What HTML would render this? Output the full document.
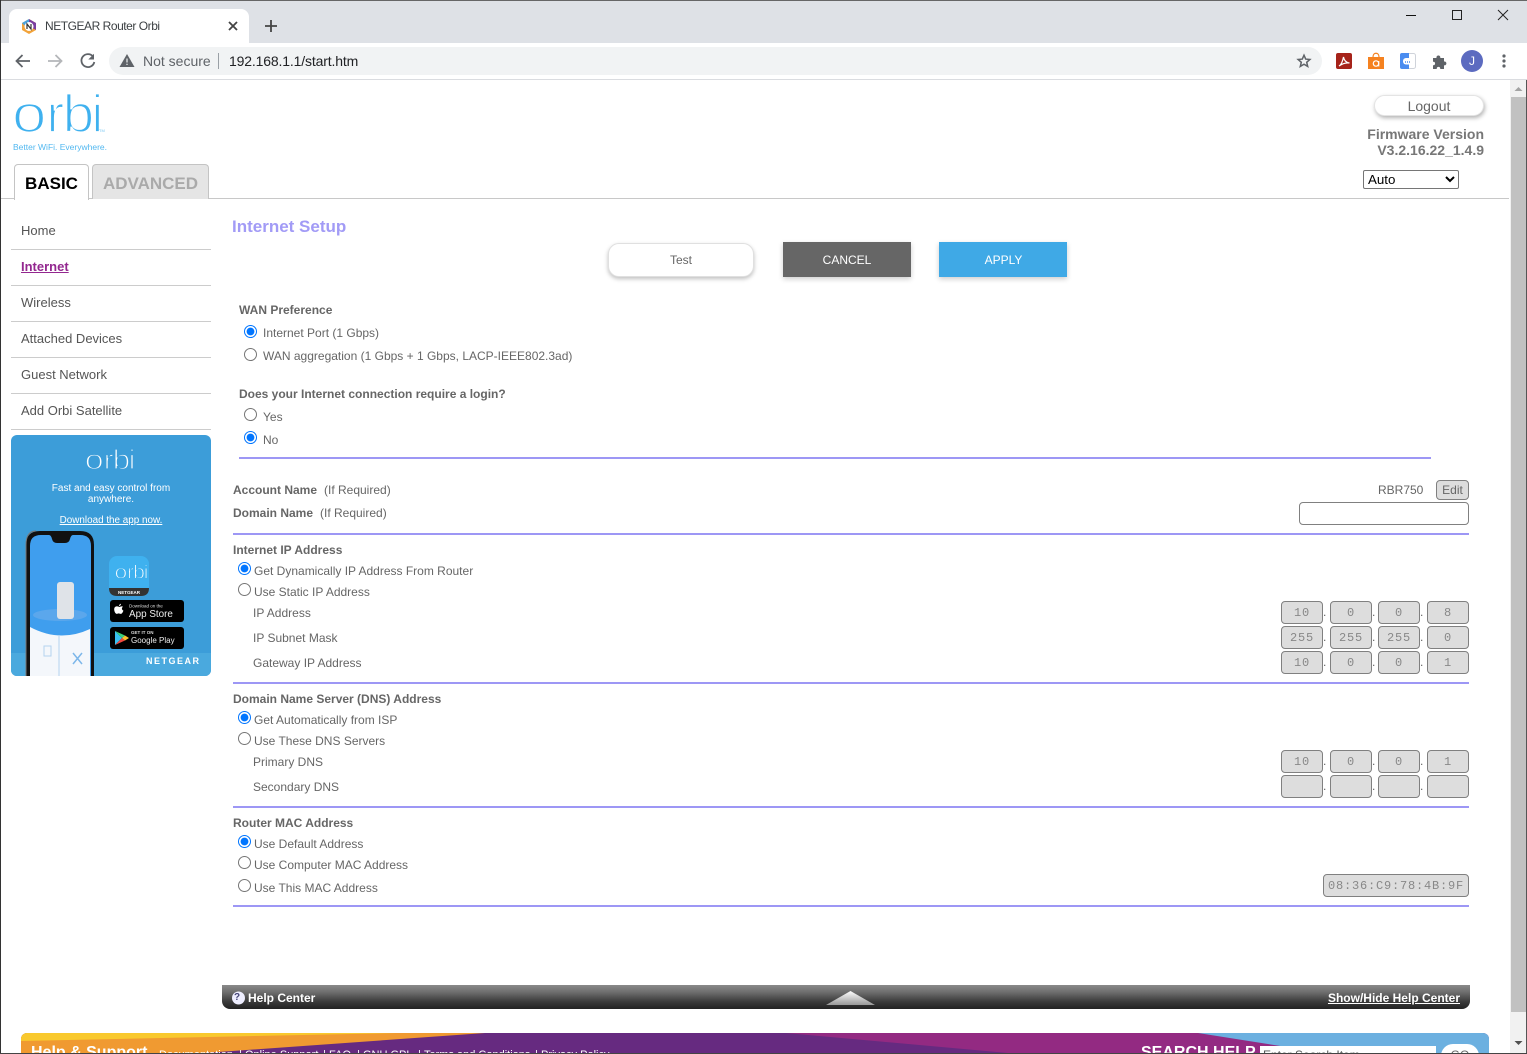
<!DOCTYPE html>
<html lang="en"><head><meta charset="utf-8"><title>NETGEAR Router Orbi</title>
<style>
html,body{margin:0;padding:0;width:1527px;height:1054px;overflow:hidden;background:#fff}
body{position:relative;font-family:"Liberation Sans",Arial,sans-serif;font-size:12px;color:#666}
.t,.b,.n,.box,.ln,.rule,input[type=radio]{position:absolute}
.t,.b,.n{white-space:nowrap;line-height:16px}
.b{font-weight:bold}
.n{font-size:13px;left:21px;color:#555}
.ln{left:11px;width:200px;height:1px;background:#ccc}
.rule{height:2px;background:#9d97f5;left:233px;width:1236px}
input[type=radio]{margin:0;width:13px;height:13px}
.box{box-sizing:border-box;height:23px;width:42px;background:#ddd;border:1px solid #808080;border-radius:4px;font-family:"Liberation Mono",monospace;font-size:12px;letter-spacing:.8px;color:#888;text-align:center;line-height:23px}
.a{left:1281px}.c2{left:1330px}.c3{left:1378px}.c4{left:1427px}
.d1{left:1323px}.d2{left:1372px}.d3{left:1420px}
.chrome{position:absolute;left:0;top:0;width:1527px;height:80px;background:#fff}
.ft{position:absolute;color:#fff;white-space:nowrap}
</style></head><body>

<!-- browser chrome -->
<div class="chrome">
 <div style="position:absolute;left:0;top:0;width:1527px;height:43px;background:#dee1e6"></div>
 <div style="position:absolute;left:9px;top:9px;width:240px;height:34px;background:#fff;border-radius:8px 8px 0 0"></div>
 <svg style="position:absolute;left:0;top:0" width="1527" height="80">
  <path d="M29 19l7 4v7l-7 4-7-4v-7z" fill="#f2a33a"/><path d="M29 19l7 4v7l-7-4z" fill="#7b3fa0"/><path d="M22 23l7-4v4l-4 3z" fill="#4aa3df"/><circle cx="29" cy="26.500" r="4.500" fill="#fff"/>
  <path d="M27 29v-5l4 5v-5" stroke="#333" stroke-width="1.200" fill="none"/>
  <path d="M229 22l8 8M237 22l-8 8" stroke="#444" stroke-width="1.800"/>
  <path d="M271 20v12M265 26h12" stroke="#444" stroke-width="1.800"/>
  <path d="M1406 15.500h10" stroke="#111"/><rect x="1452.500" y="10.500" width="9" height="9" fill="none" stroke="#222"/><path d="M1498 10l10 10M1508 10l-10 10" stroke="#222"/>
  <path d="M30 61H17M22.500 55l-6 6 6 6" stroke="#5f6368" stroke-width="1.800" fill="none"/>
  <path d="M48 61h13M55.500 55l6 6-6 6" stroke="#b4b6b9" stroke-width="1.800" fill="none"/>
  <path d="M93 56.500A6.500 6.500 0 1 0 94.300 62" stroke="#5f6368" stroke-width="1.800" fill="none"/><path d="M94 53.800v5.700h-5.700z" fill="#5f6368"/>
  <rect x="109" y="47" width="1213" height="28" rx="14" fill="#f1f3f4"/>
  <path d="M127 54l7.500 13h-15z" fill="#5f6368"/><path d="M127 58.500v4M127 63.700v1.300" stroke="#f1f3f4" stroke-width="1.200"/>
  <path d="M218.500 53v16" stroke="#9aa0a6"/>
  <path d="M1304 55.200l1.700 3.900 4.200.4-3.200 2.800 1 4.100-3.700-2.200-3.700 2.200 1-4.100-3.200-2.800 4.200-.4z" fill="none" stroke="#5f6368" stroke-width="1.500"/>
  <rect x="1336" y="53" width="16" height="16" rx="2" fill="#a6231a"/>
  <path d="M1339 66c2-1 3.500-4 4.500-9 .5 3 2 5.500 6 6-3-.5-7 .5-10.500 3z" fill="none" stroke="#fff" stroke-width="1.200"/>
  <path d="M1368 57h16v12h-16z" fill="#f58220"/><path d="M1373 57c0-5 6-5 6 0" fill="none" stroke="#f58220" stroke-width="1.200"/>
  <circle cx="1376" cy="63.500" r="2.700" fill="none" stroke="#fff" stroke-width="1.200"/><path d="M1378.800 61v5.500" stroke="#fff" stroke-width="1"/>
  <rect x="1400.500" y="53.500" width="15" height="15" rx="2" fill="#fff" stroke="#cfd3da"/>
  <path d="M1402 53h7v16h-7a2 2 0 0 1-2-2V55a2 2 0 0 1 2-2z" fill="#4a8cf0"/>
  <rect x="1403" y="58" width="9" height="6.500" rx="3" fill="#fff"/><path d="M1405 62h5" stroke="#4a8cf0" stroke-width="1.500" stroke-dasharray="1 1"/>
  <path d="M1433 58h3.500c-.6-3.300 4.400-3.300 3.800 0h3.700v3.500c3.200-.6 3.200 4.400 0 3.800V69h-3.800c.6-2.800-4-2.800-3.400 0H1433v-3.800c2.800.6 2.800-4 0-3.400z" fill="#5f6368"/>
  <circle cx="1472" cy="61" r="11" fill="#5c6bc0"/>
  <circle cx="1504" cy="56" r="1.600" fill="#5f6368"/><circle cx="1504" cy="61" r="1.600" fill="#5f6368"/><circle cx="1504" cy="66" r="1.600" fill="#5f6368"/>
  <path d="M0 79.500h1527" stroke="#dadce0"/>
 </svg>
 <div class="t" style="left:45px;top:18px;color:#3c4043;letter-spacing:-.46px">NETGEAR Router Orbi</div>
 <div class="t" style="left:143px;top:53px;font-size:14px;color:#5f6368">Not secure</div>
 <div class="t" style="left:229px;top:53px;font-size:14px;color:#202124;letter-spacing:-.15px">192.168.1.1/start.htm</div>
 <div class="t" style="left:1469px;top:53px;color:#fff">J</div>
</div>

<!-- header -->
<svg style="position:absolute;left:0;top:86px" width="130" height="70" font-family="Liberation Sans" font-size="53" fill="#3fb1ef" stroke="#fff" stroke-width="1.800">
 <text transform="translate(12 46) scale(1.17 1)">o</text>
 <text transform="translate(46.500 46)">r</text>
 <text transform="translate(62.500 46) scale(1.08 1)">b</text>
 <text transform="translate(91.500 46)">i</text>
 <text x="99" y="46" font-size="4" fill="#7cc9f3" stroke="none">TM</text>
 <text x="13" y="64" font-size="8.500" fill="#52b8f0" stroke="none" textLength="94" lengthAdjust="spacingAndGlyphs">Better WiFi. Everywhere.</text>
</svg>
<div style="position:absolute;left:0;top:198px;width:1509px;height:1px;background:#c8c8c8"></div>
<div style="position:absolute;box-sizing:border-box;left:14px;top:164px;width:75px;height:36px;background:#fff;border:1px solid #c4c4c4;border-bottom:0;border-radius:4px 4px 0 0;font:bold 17px/37px 'Liberation Sans',sans-serif;color:#000;text-align:center">BASIC</div>
<div style="position:absolute;box-sizing:border-box;left:92px;top:164px;width:117px;height:35px;background:#e5e5e5;border:1px solid #c4c4c4;border-bottom:0;border-radius:4px 4px 0 0;font:bold 17px/37px 'Liberation Sans',sans-serif;color:#aaa;text-align:center">ADVANCED</div>

<div style="position:absolute;box-sizing:border-box;left:1374px;top:95px;width:110px;height:21px;background:#fff;border:1px solid #e4e4e4;border-radius:11px;box-shadow:1px 2px 4px rgba(0,0,0,.3);font-size:14px;line-height:20px;text-align:center;color:#666">Logout</div>
<div class="b" style="right:43px;top:126px;font-size:14px;color:#777">Firmware Version</div>
<div class="b" style="right:43px;top:142px;font-size:14px;color:#777">V3.2.16.22_1.4.9</div>
<select style="position:absolute;left:1363px;top:170px;width:96px;height:19px;font:13.33px 'Liberation Sans',sans-serif;color:#000;background:#fff;border:1px solid #767676;border-radius:2px;padding:0"><option>Auto</option></select>

<!-- nav -->
<div class="n" style="top:223px">Home</div><div class="ln" style="top:249px"></div>
<div class="n" style="top:259px;font-weight:bold;color:#93278f;text-decoration:underline">Internet</div><div class="ln" style="top:285px"></div>
<div class="n" style="top:295px">Wireless</div><div class="ln" style="top:321px"></div>
<div class="n" style="top:331px">Attached Devices</div><div class="ln" style="top:357px"></div>
<div class="n" style="top:367px">Guest Network</div><div class="ln" style="top:393px"></div>
<div class="n" style="top:403px">Add Orbi Satellite</div><div class="ln" style="top:429px"></div>

<!-- banner -->
<div style="position:absolute;left:11px;top:435px;width:200px;height:241px;border-radius:6px;overflow:hidden;background:#3c9dd9">
 <svg style="position:absolute;left:0;top:0" width="200" height="241">
  <rect y="218" width="200" height="23" fill="#4aa9de"/>
  <g transform="translate(67 34) scale(.554 .52)" font-family="Liberation Sans" font-size="53" fill="#fff" stroke="#3c9dd9" stroke-width="2.500">
   <text transform="translate(12 0) scale(1.17 1)">o</text><text transform="translate(46.500 0)">r</text><text transform="translate(62.500 0) scale(1.08 1)">b</text><text transform="translate(91.500 0)">i</text>
  </g>
  <path d="M15 241V110q0-14 14-14h40q14 0 14 14v131z" fill="#111"/>
  <path d="M15 241V110q0-14 10-14" fill="none" stroke="#777" stroke-width="1"/>
  <path d="M19 241V110q0-11 11-11h8q2 0 3 4t5 4h8q4 0 5-4t3-4h7q11 0 11 11v131z" fill="#3f9eee" transform="translate(0 1)"/>
  <path d="M19 192q30 16 60 2v47H19z" fill="#f4f7fb"/>
  <ellipse cx="49" cy="180" rx="27" ry="6" fill="#5ba7ec"/>
  <rect x="46" y="147" width="17" height="37" rx="3" fill="#dfe3e8"/>
  <path d="M33 221v-10h7v10zM48 200v41" stroke="#b5d3ef" fill="none" stroke-width="1"/>
  <path d="M62 218l9 11M71 218l-9 11" stroke="#7db7ea" stroke-width="1.500"/>
  <rect x="98" y="121" width="40" height="40" rx="8" fill="#3fb1ef"/>
  <path d="M98 153h40v0q0 8-8 8h-24q-8 0-8-8z" fill="#333"/>
  <g transform="translate(99 143.500) scale(.37 .37)" font-family="Liberation Sans" font-size="53" fill="#fff" stroke="#3fb1ef" stroke-width="2.500">
   <text transform="translate(12 0) scale(1.17 1)">o</text><text transform="translate(46.500 0)">r</text><text transform="translate(62.500 0) scale(1.08 1)">b</text><text transform="translate(91.500 0)">i</text>
  </g>
  <text x="118" y="159" text-anchor="middle" font-family="Liberation Sans" font-weight="bold" font-size="4.500" fill="#fff">NETGEAR</text>
  <rect x="99" y="165" width="74" height="22" rx="3" fill="#000"/>
  <path d="M108.500 172c1-.4 2.500-1 3.500-.2-1.500 1-1.500 3 .4 3.800-.5 1.500-1.500 3.300-2.700 3.300-1 0-1.300-.5-2-.5s-1.200.5-2 .5c-1.700 0-3.400-4.500-2-6.500 1.200-1.500 3-1.100 4.800-.4zM108 171c0-1.200 1-2.200 2-2.300 0 1.300-1 2.300-2 2.300z" fill="#fff"/>
  <text x="118" y="172.500" font-family="Liberation Sans" font-size="4.500" fill="#ddd">Download on the</text>
  <text x="118" y="182" font-family="Liberation Sans" font-size="9.900" fill="#eee">App Store</text>
  <rect x="99" y="192" width="74" height="22" rx="3" fill="#000"/>
  <path d="M104 196v14l7-7z" fill="#37c0f0"/><path d="M104 196l7 7 3-2.500z" fill="#3bd07b"/><path d="M104 210l7-7 3 2.500z" fill="#f0473f"/><path d="M114 200.500l-3 2.500 3 2.500 4-2.500z" fill="#fbc02d"/>
  <text x="120" y="199" font-family="Liberation Sans" font-weight="bold" font-size="4.500" fill="#ddd">GET IT ON</text>
  <text x="120" y="208" font-family="Liberation Sans" font-size="8" fill="#eee">Google Play</text>
  <text x="135" y="229" font-family="Liberation Sans" font-weight="bold" font-size="9" letter-spacing="1.500" fill="#fff">NETGEAR</text>
 </svg>
 <div class="t" style="left:0;width:200px;text-align:center;top:48px;font-size:10px;line-height:11px;color:#fff;white-space:normal"><div style="width:130px;margin:0 auto">Fast and easy control from anywhere.</div></div>
 <div class="t" style="left:0;width:200px;text-align:center;top:78px;font-size:9.900px;color:#fff;text-decoration:underline">Download the app now.</div>
</div>

<!-- main -->
<div class="b" style="left:232px;top:219px;font-size:17px;color:#a29bf6">Internet Setup</div>
<div style="position:absolute;box-sizing:border-box;left:608px;top:243px;width:146px;height:34px;background:#fff;border:1px solid #e0e0e0;border-radius:11px;box-shadow:0 2px 4px rgba(0,0,0,.25);line-height:32px;text-align:center;color:#666">Test</div>
<div style="position:absolute;left:783px;top:242px;width:128px;height:35px;background:#666;box-shadow:0 2px 5px rgba(0,0,0,.2);line-height:36px;text-align:center;color:#fff">CANCEL</div>
<div style="position:absolute;left:939px;top:242px;width:129px;height:35px;background:linear-gradient(90deg,#3fa9e6 128px,#fff 128px);line-height:36px;text-align:center;color:#fff">APPLY</div>
<div style="position:absolute;left:939px;top:242px;width:128px;height:35px;box-shadow:0 2px 5px rgba(0,0,0,.2)"></div>

<div class="b" style="left:239px;top:302px">WAN Preference</div>
<input type="radio" name="w" checked style="left:244px;top:325px"><div class="t" style="left:263px;top:325px">Internet Port (1 Gbps)</div>
<input type="radio" name="w" style="left:244px;top:348px"><div class="t" style="left:263px;top:348px">WAN aggregation (1 Gbps + 1 Gbps, LACP-IEEE802.3ad)</div>
<div class="b" style="left:239px;top:386px">Does your Internet connection require a login?</div>
<input type="radio" name="l" style="left:244px;top:408px"><div class="t" style="left:263px;top:409px">Yes</div>
<input type="radio" name="l" checked style="left:244px;top:431px"><div class="t" style="left:263px;top:432px">No</div>
<div class="rule" style="left:239px;width:1192px;top:457px"></div>

<div class="b" style="left:233px;top:482px">Account Name</div><div class="t" style="left:324px;top:482px">(If Required)</div>
<div class="t" style="left:1378px;top:482px">RBR750</div>
<div class="box" style="left:1436px;top:480px;width:33px;height:20px;font-family:'Liberation Sans',sans-serif;letter-spacing:0;line-height:18px;color:#666">Edit</div>
<div class="b" style="left:233px;top:505px">Domain Name</div><div class="t" style="left:320px;top:505px">(If Required)</div>
<div class="box" style="left:1299px;top:502px;width:170px;background:#fff"></div>
<div class="rule" style="top:533px"></div>

<div class="b" style="left:233px;top:542px">Internet IP Address</div>
<input type="radio" name="i" checked style="left:238px;top:562px"><div class="t" style="left:254px;top:563px">Get Dynamically IP Address From Router</div>
<input type="radio" name="i" style="left:238px;top:583px"><div class="t" style="left:254px;top:584px">Use Static IP Address</div>
<div class="t" style="left:253px;top:605px">IP Address</div>
<div class="t" style="left:253px;top:630px">IP Subnet Mask</div>
<div class="t" style="left:253px;top:655px">Gateway IP Address</div>
<div class="box a" style="top:601px">10</div><div class="box c2" style="top:601px">0</div><div class="box c3" style="top:601px">0</div><div class="box c4" style="top:601px">8</div>
<div class="box a" style="top:626px">255</div><div class="box c2" style="top:626px">255</div><div class="box c3" style="top:626px">255</div><div class="box c4" style="top:626px">0</div>
<div class="box a" style="top:651px">10</div><div class="box c2" style="top:651px">0</div><div class="box c3" style="top:651px">0</div><div class="box c4" style="top:651px">1</div>
<div class="t d1" style="top:604px">.</div><div class="t d2" style="top:604px">.</div><div class="t d3" style="top:604px">.</div>
<div class="t d1" style="top:629px">.</div><div class="t d2" style="top:629px">.</div><div class="t d3" style="top:629px">.</div>
<div class="t d1" style="top:654px">.</div><div class="t d2" style="top:654px">.</div><div class="t d3" style="top:654px">.</div>
<div class="rule" style="top:682px"></div>

<div class="b" style="left:233px;top:691px">Domain Name Server (DNS) Address</div>
<input type="radio" name="d" checked style="left:238px;top:711px"><div class="t" style="left:254px;top:712px">Get Automatically from ISP</div>
<input type="radio" name="d" style="left:238px;top:732px"><div class="t" style="left:254px;top:733px">Use These DNS Servers</div>
<div class="t" style="left:253px;top:754px">Primary DNS</div>
<div class="t" style="left:253px;top:779px">Secondary DNS</div>
<div class="box a" style="top:750px">10</div><div class="box c2" style="top:750px">0</div><div class="box c3" style="top:750px">0</div><div class="box c4" style="top:750px">1</div>
<div class="box a" style="top:775px"></div><div class="box c2" style="top:775px"></div><div class="box c3" style="top:775px"></div><div class="box c4" style="top:775px"></div>
<div class="t d1" style="top:753px">.</div><div class="t d2" style="top:753px">.</div><div class="t d3" style="top:753px">.</div>
<div class="t d1" style="top:778px">.</div><div class="t d2" style="top:778px">.</div><div class="t d3" style="top:778px">.</div>
<div class="rule" style="top:806px"></div>

<div class="b" style="left:233px;top:815px">Router MAC Address</div>
<input type="radio" name="m" checked style="left:238px;top:835px"><div class="t" style="left:254px;top:836px">Use Default Address</div>
<input type="radio" name="m" style="left:238px;top:856px"><div class="t" style="left:254px;top:857px">Use Computer MAC Address</div>
<input type="radio" name="m" style="left:238px;top:879px"><div class="t" style="left:254px;top:880px">Use This MAC Address</div>
<div class="box" style="left:1323px;top:874px;width:146px">08:36:C9:78:4B:9F</div>
<div class="rule" style="top:905px"></div>

<!-- help bar -->
<div style="position:absolute;left:222px;top:985px;width:1248px;height:24px;border-radius:0 0 8px 8px;background:linear-gradient(#8a8a8a,#6e6e6e 30%,#3a3a3a 70%,#222)"></div>
<svg style="position:absolute;left:222px;top:985px" width="1248" height="24">
 <defs><linearGradient id="g" x1="0" y1="0" x2="0" y2="1"><stop offset="0" stop-color="#fff"/><stop offset="1" stop-color="#999"/></linearGradient></defs>
 <circle cx="16.500" cy="13" r="6.500" fill="#eef"/>
 <path d="M604 20l24.500-14L653 20z" fill="url(#g)"/>
</svg>
<div class="b" style="left:234px;top:990px;font-size:10px;color:#447">?</div>
<div class="b" style="left:248px;top:990px;color:#fff">Help Center</div>
<div class="b" style="right:67px;top:990px;color:#fff;text-decoration:underline">Show/Hide Help Center</div>

<!-- footer -->
<div style="position:absolute;left:21px;top:1033px;width:1468px;height:20px;overflow:hidden;border-radius:6px 6px 0 0;background:#662a80">
 <svg style="position:absolute;left:0;top:0" width="1468" height="21">
  <path d="M765 0H1177L1400 21H998z" fill="#932a82"/>
  <path d="M1177 0H1468V21H1310z" fill="#6cb0e0"/>
  <path d="M0 0H464L169 21H0z" fill="#f09a31"/>
  <path d="M0 0H376L0 8z" fill="#f9c92e"/>
 </svg>
 <div class="ft" style="left:10px;top:11px;font:bold 16px/18px 'Liberation Sans',sans-serif">Help &amp; Support</div>
 <div class="ft" style="left:138px;top:16px;font-size:11px">Documentation</div>
 <div class="ft" style="left:218px;top:16px;font-size:11px">|</div>
 <div class="ft" style="left:224px;top:16px;font-size:11px">Online Support</div>
 <div class="ft" style="left:302px;top:16px;font-size:11px">|</div>
 <div class="ft" style="left:308px;top:16px;font-size:11px">FAQ</div>
 <div class="ft" style="left:336px;top:16px;font-size:11px">|</div>
 <div class="ft" style="left:342px;top:16px;font-size:11px">GNU GPL</div>
 <div class="ft" style="left:397px;top:16px;font-size:11px">|</div>
 <div class="ft" style="left:403px;top:16px;font-size:11px">Terms and Conditions</div>
 <div class="ft" style="left:514px;top:16px;font-size:11px">|</div>
 <div class="ft" style="left:520px;top:16px;font-size:11px">Privacy Policy</div>
 <div class="ft" style="left:1120px;top:11px;font:bold 16px/18px 'Liberation Sans',sans-serif">SEARCH HELP</div>
 <div style="position:absolute;left:1239px;top:13px;width:176px;height:20px;background:#fff;color:#555;font-size:12px;line-height:18px;padding-left:3px;box-sizing:border-box">Enter Search Item</div>
 <div style="position:absolute;left:1420px;top:11px;width:38px;height:24px;background:#fff;border-radius:12px;color:#666;font-size:12px;line-height:22px;text-align:center">GO</div>
</div>

<!-- scrollbar -->
<div style="position:absolute;left:1510px;top:80px;width:17px;height:974px;background:#f1f1f1"></div>
<div style="position:absolute;left:1511px;top:97px;width:15px;height:915px;background:#c1c1c1"></div>
<svg style="position:absolute;left:1510px;top:80px" width="17" height="974"><path d="M4.500 11l4-4 4 4z" fill="#a3a3a3"/><path d="M4.500 961l4 4 4-4z" fill="#505050"/></svg>

<!-- window edges -->
<div style="position:absolute;left:0;top:0;width:1527px;height:1px;background:#666"></div>
<div style="position:absolute;left:0;top:0;width:1px;height:1054px;background:#333"></div>
<div style="position:absolute;left:1526px;top:80px;width:1px;height:974px;background:#555"></div>
<div style="position:absolute;left:0;top:1053px;width:1527px;height:1px;background:#444"></div>
</body></html>
